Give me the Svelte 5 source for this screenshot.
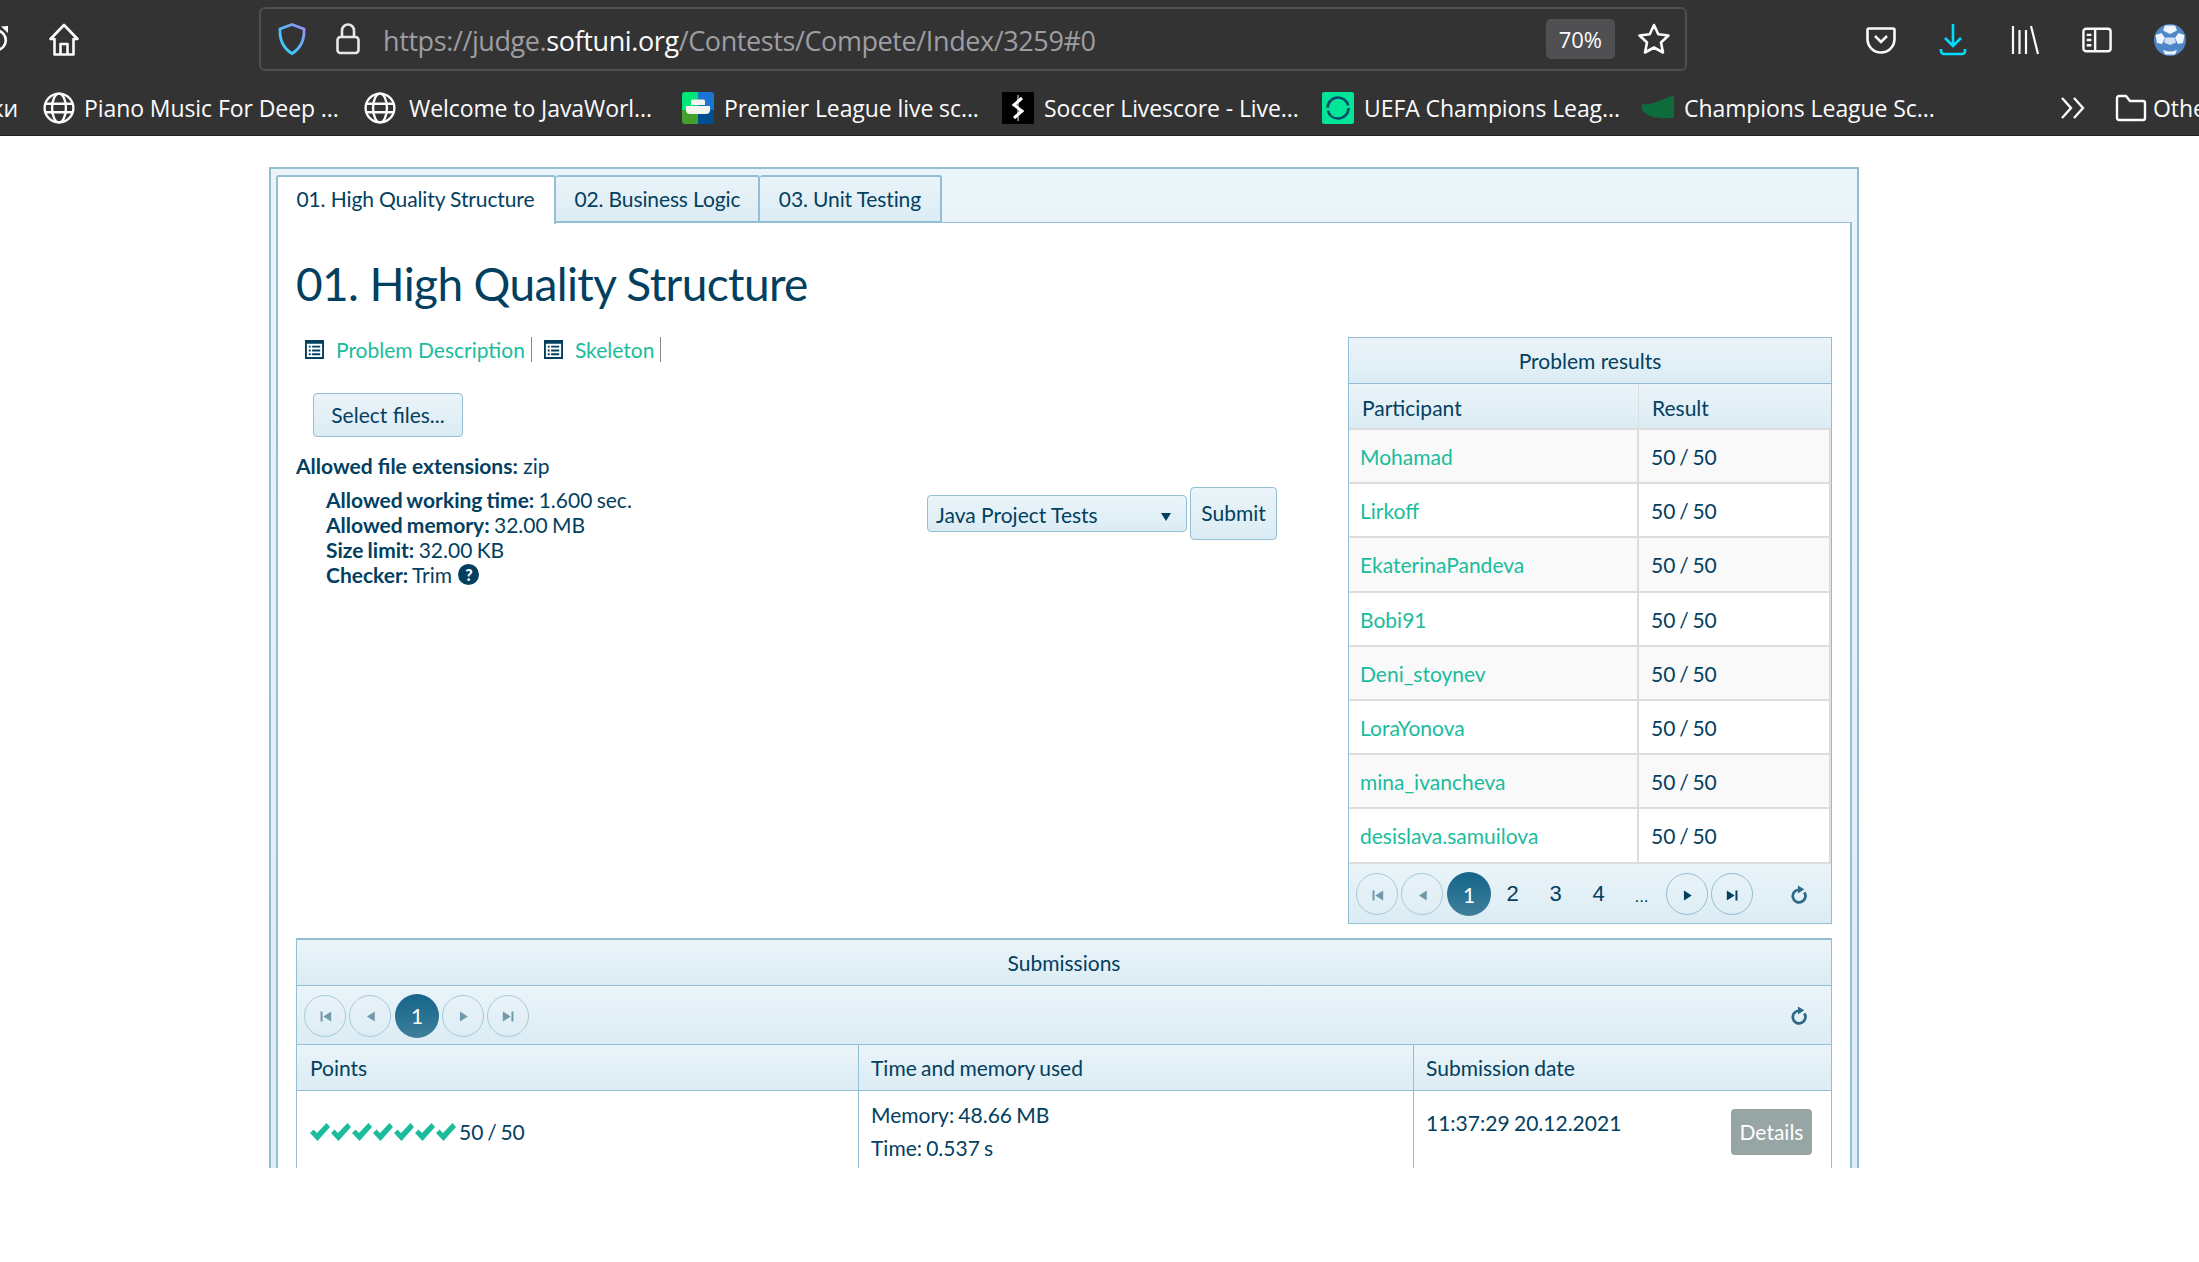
<script>
  const tabs = ['01. High Quality Structure', '02. Business Logic', '03. Unit Testing'];
  const people = ['Mohamad', 'Lirkoff', 'EkaterinaPandeva', 'Bobi91', 'Deni_stoynev', 'LoraYonova', 'mina_ivancheva', 'desislava.samuilova'];
  const marks = [1, 2, 3, 4, 5, 6, 7];
</script>

{#snippet first()}<svg viewBox="0 0 12 12" class="arrow"><path d="M2.500 2.500h1.400v7H2.500z M10 2.500v7L4.500 6z"/></svg>{/snippet}
{#snippet prev()}<svg viewBox="0 0 12 12" class="arrow"><path d="M9 2.500v7L3.500 6z"/></svg>{/snippet}
{#snippet next()}<svg viewBox="0 0 12 12" class="arrow"><path d="M3.500 2.500v7L9 6z"/></svg>{/snippet}
{#snippet last()}<svg viewBox="0 0 12 12" class="arrow"><path d="M9.500 2.500h-1.400v7h1.400z M2 2.500v7L7.500 6z"/></svg>{/snippet}
{#snippet refresh()}<svg viewBox="0 0 16 18" class="refresh"><path d="M12.500 7a6 6 0 1 1-5-2.500" fill="none" stroke="#2d6a85" stroke-width="2.600"/><path d="M6.500 0.500l6 3.500-6 4z" fill="#2d6a85"/></svg>{/snippet}
{#snippet doc()}<svg viewBox="0 0 20 20" class="doc"><path fill="#03405f" fill-rule="evenodd" d="M0 0h20v20H0z M2 4v14h16V4z"/><path stroke="#03405f" stroke-width="2" d="M4 7h2M7.500 7H16M4 11h2M7.500 11H16M4 15h2M7.500 15H16"/></svg>{/snippet}
{#snippet globe()}<svg viewBox="0 0 30 30" class="bm-icon"><g fill="none" stroke="#fbfbfe" stroke-width="2.200"><circle cx="15" cy="15" r="13.500"/><ellipse cx="15" cy="15" rx="6.500" ry="13.500"/><path d="M2 11h26M2 19h26"/></g></svg>{/snippet}

<div class="chrome">
  <div class="toolbar">
    <svg viewBox="0 0 8 28" class="reload"><path d="M-2 4.500a10 10 0 0 1 0 19.500" fill="none" stroke="#fbfbfe" stroke-width="2.600"/><path d="M1 0.500L8 0v7z" fill="#fbfbfe"/></svg>
    <svg viewBox="0 0 32 34" class="home"><path d="M16 2L2.500 16h4v15.500h19V16h4z M12.500 31.500V21h7v10.500" fill="none" stroke="#fbfbfe" stroke-width="2.600" stroke-linejoin="round"/></svg>
    <div class="urlbar">
      <svg viewBox="0 0 30 34" class="shield"><defs><linearGradient id="sh" x1="1" y1="0" x2="0" y2="1"><stop offset="0" stop-color="#9d8cf5"/><stop offset=".5" stop-color="#59b8fa"/><stop offset="1" stop-color="#2fd4f5"/></linearGradient></defs><path d="M15 2.500L27 7c.600 11-3 19-12 24.500C6 26 2.400 18 3 7z" fill="none" stroke="url(#sh)" stroke-width="2.800"/></svg>
      <svg viewBox="0 0 26 34" class="lock"><path d="M7 15V8.500a6 6 0 0 1 12 0V15" fill="none" stroke="#e8e8ea" stroke-width="2.600"/><rect x="2.500" y="15" width="21" height="16" rx="3" fill="none" stroke="#e8e8ea" stroke-width="2.600"/></svg>
      <span class="url">https://judge.<b>softuni.org</b>/Contests/Compete/Index/3259#0</span>
      <span class="zoomlevel">70%</span>
      <svg viewBox="0 0 34 34" class="star"><path d="M17 3l4.300 9.300 10.200 1.200-7.500 7 2 10L17 25.500 8 30.500l2-10-7.500-7 10.200-1.200z" fill="none" stroke="#fbfbfe" stroke-width="2.600" stroke-linejoin="round"/></svg>
    </div>
    <div class="tools">
      <svg viewBox="0 0 30 30" class="tool"><path d="M3 3.500h24a1.500 1.500 0 0 1 1.500 1.500v9a13.500 13.500 0 0 1-27 0V5A1.500 1.500 0 0 1 3 3.500z" fill="none" stroke="#fbfbfe" stroke-width="2.600"/><path d="M9 11l6 6 6-6" fill="none" stroke="#fbfbfe" stroke-width="2.600"/></svg>
      <svg viewBox="0 0 30 34" class="tool dl"><path d="M15 1v22M7 15l8 8 8-8M3 26v2a3 3 0 0 0 3 3h18a3 3 0 0 0 3-3v-2" fill="none" stroke="#00ddff" stroke-width="2.600"/></svg>
      <svg viewBox="0 0 30 30" class="tool"><path d="M3 1v28M9.500 5v24M16 5v24M21 1l7 28" fill="none" stroke="#fbfbfe" stroke-width="2.200"/></svg>
      <svg viewBox="0 0 32 28" class="tool"><rect x="1.500" y="2" width="29" height="24" rx="3" fill="none" stroke="#fbfbfe" stroke-width="2.600"/><path d="M14 2v24M5 8.500h5M5 14h5M5 19.500h5" stroke="#fbfbfe" stroke-width="2.600"/></svg>
      <svg viewBox="0 0 32 32" class="tool ball"><circle cx="16" cy="16" r="16" fill="#4f86c6"/><path d="M11 1.500h10l2 5-7 3.500-7-3.500z M1.500 11l6-2 3.500 5-3 6-5-1z M30.500 11l-6-2-3.500 5 3 6 5-1z M9 26l5 1.500h4l5-1.500-2 4.500H11z" fill="#eef4fb"/><path d="M11.500 13.500h9l1.500 5-6 2.500-6-2.500z" fill="#cfe0f3"/></svg>
    </div>
  </div>
  <div class="bookmarks">
    <span class="bm clipped">ки</span>
    <span class="bm">{@render globe()}Piano Music For Deep ...</span>
    <span class="bm wide-gap">{@render globe()}Welcome to JavaWorl...</span>
    <span class="bm"><svg viewBox="0 0 32 32" class="bm-icon"><defs><clipPath id="fav"><rect width="32" height="32" rx="3"/></clipPath></defs><g clip-path="url(#fav)"><rect width="16" height="18" fill="#00e676"/><rect x="16" width="16" height="18" fill="#1976d2"/><rect y="18" width="16" height="14" fill="#43a02f"/><rect x="16" y="18" width="16" height="14" fill="#004f91"/></g><path d="M9 9a1.500 1.500 0 0 1 1.500-1.500h11A1.500 1.500 0 0 1 23 9v4H9z M4 14h24v4a4 4 0 0 1-4 4H8a4 4 0 0 1-4-4z" fill="#f4f4ec"/></svg>Premier League live sc...</span>
    <span class="bm"><svg viewBox="0 0 32 32" class="bm-icon"><rect width="32" height="32" fill="#000"/><path d="M20 6l-8 7 8 6-8 7" fill="none" stroke="#fff" stroke-width="3"/><path d="M16 3v26" stroke="#fff" stroke-width="1"/></svg>Soccer Livescore - Live...</span>
    <span class="bm"><svg viewBox="0 0 32 32" class="bm-icon"><rect width="32" height="32" rx="2" fill="#00e596"/><circle cx="16" cy="16" r="10.500" fill="none" stroke="#0b4a6b" stroke-width="2.600" stroke-dasharray="30 3 30 3"/></svg>UEFA Champions Leag...</span>
    <span class="bm"><svg viewBox="0 0 32 32" class="bm-icon"><path d="M0 12C10 14 20 6 32 4v22C20 26 8 28 0 18z" fill="#0d6b3c"/></svg>Champions League Sc...</span>
    <span class="bm-end">
      <svg viewBox="0 0 26 24" class="more"><path d="M2 2l9 10-9 10M14 2l9 10-9 10" fill="none" stroke="#fbfbfe" stroke-width="2.400"/></svg>
      <svg viewBox="0 0 32 28" class="folder"><path d="M2 4a2 2 0 0 1 2-2h7l4 5h13a2 2 0 0 1 2 2v15a2 2 0 0 1-2 2H4a2 2 0 0 1-2-2z" fill="none" stroke="#fbfbfe" stroke-width="2.400"/></svg>
      Othe
    </span>
  </div>
</div>

<div class="page">
  <div class="panel">
    <ul class="tabs">
      {#each tabs as tab, i}
        <li class:active={i === 0}>{tab}</li>
      {/each}
    </ul>
    <div class="content">
      <h1>01. High Quality Structure</h1>
      <div class="columns">
        <div class="left">
          <div class="links">
            {@render doc()}<a href="#p">Problem Description</a><i></i>
            {@render doc()}<a href="#s">Skeleton</a><i></i>
          </div>
          <div class="select-btn">Select files...</div>
          <div class="form-row">
            <div class="limits">
              <p class="ext"><b>Allowed file extensions:</b> zip</p>
              <ul>
                <li><b>Allowed working time:</b> 1.600 sec.</li>
                <li><b>Allowed memory:</b> 32.00 MB</li>
                <li><b>Size limit:</b> 32.00 KB</li>
                <li><b>Checker:</b> Trim <span class="help">?</span></li>
              </ul>
            </div>
            <div class="submit-row">
              <div class="dropdown">Java Project Tests<span class="caret"></span></div>
              <div class="submit">Submit</div>
            </div>
          </div>
        </div>
        <div class="results">
          <div class="grid-title">Problem results</div>
          <div class="res-row res-head"><div>Participant</div><div>Result</div></div>
          {#each people as name, i}
            <div class="res-row" class:alt={i % 2 === 0}><div><a href="#u">{name}</a></div><div class="score">50 / 50</div></div>
          {/each}
          <div class="pager">
            <span class="pg off">{@render first()}</span>
            <span class="pg off">{@render prev()}</span>
            <span class="pg cur">1</span>
            <span class="num">2</span><span class="num">3</span><span class="num">4</span><span class="num dots">...</span>
            <span class="pg">{@render next()}</span>
            <span class="pg">{@render last()}</span>
            <span class="pg-refresh">{@render refresh()}</span>
          </div>
        </div>
      </div>
      <div class="subs">
        <div class="grid-title">Submissions</div>
        <div class="pager sub-pager">
          <span class="pg off">{@render first()}</span>
          <span class="pg off">{@render prev()}</span>
          <span class="pg cur">1</span>
          <span class="pg off">{@render next()}</span>
          <span class="pg off">{@render last()}</span>
          <span class="pg-refresh">{@render refresh()}</span>
        </div>
        <div class="sub-row sub-head"><div>Points</div><div>Time and memory used</div><div>Submission date</div></div>
        <div class="sub-row sub-body">
          <div class="points">
            {#each marks as m}<svg viewBox="0 0 21 18" class="check"><path d="M0 10l3.500-3.500 3.500 3.500L16.500 0 20 4 7.500 18z" fill="#1abc9c"/></svg>{/each}
            <span>50 / 50</span>
          </div>
          <div class="usage">Memory: 48.66 MB<br>Time: 0.537 s</div>
          <div class="date"><span>11:37:29 20.12.2021</span><span class="details">Details</span></div>
        </div>
      </div>
    </div>
  </div>
</div>

<style>
  :global(body) { background: #fff; overflow: hidden; }

  .chrome { height: 136px; background: #333; color: #fbfbfe; font-family: "Open Sans", sans-serif; overflow: hidden; border-bottom: 1px solid #222; box-sizing: border-box; }
  .toolbar { height: 80px; display: flex; align-items: center; }
  .reload { width: 8px; height: 28px; flex: none; }
  .home { width: 32px; height: 34px; margin-left: 40px; flex: none; }
  .urlbar { width: 1428px; height: 64px; margin-left: 179px; margin-top: -3px; box-sizing: border-box; border: 2px solid #4f4f52; border-radius: 6px; display: flex; align-items: center; padding: 0 14px 0 16px; flex: none; }
  .shield { width: 30px; height: 34px; flex: none; }
  .lock { width: 26px; height: 34px; margin-left: 28px; flex: none; }
  .url { margin-left: 22px; padding-top: 3px; font-size: 27px; color: #9d9da3; flex: 1; white-space: nowrap; letter-spacing: -.4px; }
  .url b { color: #fbfbfe; font-weight: 400; }
  .zoomlevel { background: #505052; border-radius: 5px; padding: 0 13px; line-height: 40px; font-size: 22px; }
  .star { width: 34px; height: 34px; margin-left: 22px; flex: none; }
  .tools { display: flex; align-items: center; }
  .tool { width: 30px; height: 30px; flex: none; margin-left: 42px; }
  .dl { height: 34px; }
  .ball { width: 32px; height: 32px; }
  .tools svg:first-child { margin-left: 179px; }

  .bookmarks { display: flex; align-items: center; height: 56px; font-size: 23px; white-space: nowrap; letter-spacing: -.08px; }
  .bm { display: flex; align-items: center; gap: 10px; width: 320px; flex: none; }
  .wide-gap { gap: 13px; width: 318px; }
  .bm:nth-child(2) { width: 321px; gap: 9px; }
  .bm.clipped { width: 18px; margin-right: 25px; justify-content: flex-end; overflow: hidden; }
  .bm-icon { width: 32px; height: 32px; flex: none; }
  .bm-end { display: flex; align-items: center; margin-left: 98px; flex: none; }
  .more { width: 26px; height: 24px; margin-right: 29px; }
  .folder { width: 32px; height: 28px; margin-right: 6px; }

  .page { height: 1032px; padding: 31px 340px 0 269px; box-sizing: border-box; font-family: Lato, sans-serif; color: #03405f; font-size: 21px; }
  .panel { height: 1001px; overflow: hidden; box-sizing: border-box; border: 2px solid #93bed3; border-bottom: 0; background: linear-gradient(#eaf4f9, #dcecf4); padding: 6px 5px 0; width: 1590px; }

  .tabs { list-style: none; display: flex; margin: 0; padding: 0; height: 48px; }
  .tabs li { box-sizing: border-box; height: 47px; line-height: 44px; padding: 0 18.5px; background: linear-gradient(#eaf4f9, #dcecf4); border: 2px solid #93bed3; border-left-width: 0; border-bottom-width: 1px; border-radius: 3px 3px 0 0; letter-spacing: -.12px; }
  .tabs li.active { background: #fff; border-left-width: 2px; height: 49px; border-bottom: 0; position: relative; z-index: 1; padding-right: 20px; }
  .tabs li:nth-child(2) { padding-right: 18px; padding-left: 18px; }

  .content { background: #fff; border: 2px solid #93bed3; border-top-width: 1px; height: 960px; padding: 0 18px; box-sizing: border-box; margin-top: -1px; }
  h1 { font-size: 46px; font-weight: 400; margin: 33px 0 0; line-height: 55px; letter-spacing: -.62px; }

  .columns { display: flex; justify-content: space-between; margin-top: 26px; }
  .left { width: 1000px; }
  .links { display: flex; align-items: center; padding-left: 9px; height: 26px; margin-top: -1px; }
  .doc { width: 19px; height: 19px; margin-right: 12px; }
  .links a { color: #1abc9c; text-decoration: none; }
  .links i { display: block; width: 1px; height: 25px; background: #888; margin: 0 12px 0 6px; }
  .select-btn { width: 150px; height: 44px; margin: 31px 0 0 17px; box-sizing: border-box; border: 1px solid #93bed3; border-radius: 4px; text-align: center; line-height: 42px; background: linear-gradient(#eaf4f9, #dcecf4); }

  .form-row { display: flex; }
  .limits { width: 631px; }
  .ext { margin: 16px 0 0; line-height: 25px; }
  .limits b { font-weight: 700; }
  .limits ul { list-style: none; margin: 9px 0 0; padding: 0 0 0 30px; line-height: 25px; word-spacing: -1px; }
  .help { display: inline-block; width: 21px; height: 21px; line-height: 21px; margin-left: 2px; border-radius: 50%; background: #03405f; color: #fff; font-size: 16px; font-weight: 900; text-align: center; vertical-align: 2px; }

  .submit-row { display: flex; align-items: flex-end; margin-top: 50px; height: 53px; gap: 3px; }
  .dropdown { position: relative; width: 260px; height: 37px; box-sizing: border-box; border: 1px solid #93bed3; border-radius: 4px; padding-left: 8px; line-height: 38px; margin-bottom: 8px; background: linear-gradient(#eaf4f9, #dcecf4); }
  .caret { position: absolute; right: 15px; top: 17px; border: 5px solid transparent; border-top: 8px solid #03405f; border-bottom: 0; }
  .submit { width: 87px; height: 53px; box-sizing: border-box; border: 1px solid #93bed3; border-radius: 4px; text-align: center; line-height: 50px; background: linear-gradient(#eaf4f9, #dcecf4); }

  .results { width: 484px; flex: none; box-sizing: border-box; border: 1px solid #93bed3; }
  .grid-title { height: 46px; line-height: 46px; text-align: center; background: linear-gradient(#eaf4f9, #dcecf4); border-bottom: 1px solid #93bed3; box-sizing: border-box; }
  .res-row { display: grid; grid-template-columns: 290px 1fr; height: 54.2px; box-sizing: border-box; border-bottom: 2px solid #ddd; }
  .res-row > div { padding-left: 11px; line-height: 54px; border-right: 2px solid #ddd; }
  .res-row > div.score { padding-left: 12px; word-spacing: -1.6px; }
  .res-row.alt { background: #f9f9f9; }
  .res-row a { color: #1abc9c; text-decoration: none; }
  .res-row.res-head { height: 46px; background: linear-gradient(#eaf4f9, #dcecf4); border-bottom: 2px solid #ddd; }
  .res-row.res-head > div { line-height: 47px; padding-left: 13px; border-right: 1px solid #ddd; }
  .res-row.res-head > div:last-child { border-right: 0; }

  .pager { height: 59px; display: flex; align-items: center; padding: 2px 0 0 7px; background: linear-gradient(#eaf4f9, #dcecf4); gap: 3px; box-sizing: border-box; }
  .pg { width: 42px; height: 42px; box-sizing: border-box; border: 1px solid #93bed3; border-radius: 50%; display: flex; align-items: center; justify-content: center; flex: none; }
  .pg.off { opacity: .75; }
  .pg.cur { background: linear-gradient(#14658a, #3f7f9b); color: #fff; border: 0; width: 44px; height: 44px; margin-left: 1px; }
  .num { width: 43px; margin-left: -3px; text-align: center; font-family: "Liberation Sans", sans-serif; font-size: 22px; }
  .dots { font-size: 17px; padding-top: 6px; }
  .arrow { width: 17px; height: 17px; fill: #03405f; margin-top: 2px; }
  .pg.off .arrow { fill: #4c7d94; }
  .refresh { width: 17px; height: 19px; }
  .pg-refresh { margin-left: auto; margin-right: 23px; display: flex; }

  .subs { margin-top: 14px; border: 1px solid #93bed3; border-top-width: 2px; }
  .sub-pager { height: 59px; border-bottom: 1px solid #93bed3; }
  .sub-row { display: grid; grid-template-columns: 562px 555px 1fr; }
  .sub-row > div { border-right: 1px solid #93bed3; box-sizing: border-box; padding-left: 12px; }
  .sub-row > div:first-child { padding-left: 13px; }
  .sub-row > div:last-child { border-right: 0; }
  .sub-head { height: 45px; line-height: 45px; background: linear-gradient(#eaf4f9, #dcecf4); border-bottom: 1px solid #93bed3; word-spacing: -1px; }
  .sub-body { height: 90px; }
  .points { display: flex; align-items: center; padding-bottom: 8px; word-spacing: -1.600px; }
  .points span { margin-left: 2px; }
  .check { width: 21px; height: 18px; flex: none; }
  .usage { line-height: 33px; padding-top: 7px; word-spacing: -1.200px; }
  .date { display: flex; justify-content: space-between; padding-right: 19px; padding-top: 18px; line-height: 28px; align-items: flex-start; word-spacing: -1px; }
  .details { background: #97a5a5; color: #fff; border-radius: 4px; width: 81px; height: 46px; line-height: 46px; text-align: center; }
</style>
